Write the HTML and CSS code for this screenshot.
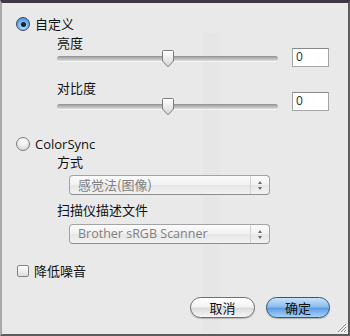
FILE: index.html
```html
<!DOCTYPE html>
<html lang="zh">
<head>
<meta charset="utf-8">
<title>自定义</title>
<link rel="stylesheet" href="styles.css">
</head>
<body>
<div class="window">
  <div class="ghost-band"></div>
  <div class="pane">
    <div class="option-row">
      <span class="radio radio-on"><span class="radio-dot"></span></span>
      <span class="option-text">自定义</span>
    </div>
    <div class="label label-brightness">亮度</div>
    <div class="slider-row slider-row-1">
      <div class="slider">
        <div class="track"></div>
        <svg class="thumb" width="14" height="18" viewBox="0 0 14 18">
          <defs>
            <linearGradient id="tg1" x1="0" y1="0" x2="0" y2="1">
              <stop offset="0" stop-color="#ffffff"/>
              <stop offset="1" stop-color="#d6d6d6"/>
            </linearGradient>
          </defs>
          <path d="M1.5 1.5 Q1.5 0.5 2.5 0.5 H11.5 Q12.5 0.5 12.5 1.5 V11 L7 16.8 L1.5 11 Z" fill="url(#tg1)" stroke="#7a7a7a" stroke-width="1"/>
        </svg>
      </div>
      <div class="field field-1">0</div>
    </div>
    <div class="label label-contrast">对比度</div>
    <div class="slider-row slider-row-2">
      <div class="slider">
        <div class="track"></div>
        <svg class="thumb" width="14" height="18" viewBox="0 0 14 18">
          <defs>
            <linearGradient id="tg2" x1="0" y1="0" x2="0" y2="1">
              <stop offset="0" stop-color="#ffffff"/>
              <stop offset="1" stop-color="#d6d6d6"/>
            </linearGradient>
          </defs>
          <path d="M1.5 1.5 Q1.5 0.5 2.5 0.5 H11.5 Q12.5 0.5 12.5 1.5 V11 L7 16.8 L1.5 11 Z" fill="url(#tg2)" stroke="#7a7a7a" stroke-width="1"/>
        </svg>
      </div>
      <div class="field field-2">0</div>
    </div>

    <div class="option-row option-colorsync">
      <span class="radio"></span>
      <span class="option-text latin">ColorSync</span>
    </div>
    <div class="label label-method">方式</div>
    <div class="popup popup-1">
      <span class="popup-text">感觉法(图像)</span>
      <span class="popup-arrows"><span class="arr-up"></span><span class="arr-down"></span></span>
    </div>
    <div class="label label-profile">扫描仪描述文件</div>
    <div class="popup popup-2">
      <span class="popup-text">Brother sRGB Scanner</span>
      <span class="popup-arrows"><span class="arr-up"></span><span class="arr-down"></span></span>
    </div>

    <div class="option-row option-noise">
      <span class="checkbox"></span>
      <span class="option-text">降低噪音</span>
    </div>

    <div class="buttons">
      <span class="btn btn-cancel">取消</span>
      <span class="btn btn-ok">确定</span>
    </div>
  </div>
  <svg class="grip" width="11" height="11" viewBox="0 0 11 11">
    <path d="M10 2 L2 10 M10 5 L5 10 M10 8 L8 10" stroke="#8a8a8a" stroke-width="1"/>
    <path d="M10.5 3 L3 10.5 M10.5 6 L6 10.5 M10.5 9 L9 10.5" stroke="#ffffff" stroke-width="0.8"/>
  </svg>
</div>
</body>
</html>
```

FILE: styles.css
```css
* { box-sizing: border-box; }

html, body {
  margin: 0;
  padding: 0;
  background: #e8e8e8;
}

body {
  font-family: "Noto Sans CJK SC", "Open Sans", sans-serif;
  font-size: 13px;
  color: #111;
}

.window {
  position: relative;
  width: 350px;
  height: 336px;
  background: #e9e9e9;
  border-top: 3px solid #3f3843;
  border-left: 2px solid #a9a9a9;
  border-right: 2px solid #5c5c5c;
  border-bottom: 2px solid #5c5c5c;
  overflow: hidden;
}

.ghost-band {
  position: absolute;
  left: 201px;
  top: 30px;
  width: 17px;
  height: 300px;
  background: rgba(0, 0, 0, 0.012);
}

.pane {
  position: relative;
  padding: 14px 18px 0 14px;
}

.option-row {
  display: flex;
  align-items: center;
  height: 14px;
  gap: 5px;
}

.option-text {
  line-height: 14px;
  white-space: nowrap;
}

.latin {
  font-family: "Open Sans", sans-serif;
  font-size: 13px;
}

.radio {
  width: 14px;
  height: 14px;
  border-radius: 50%;
  border: 1px solid #7d7d7d;
  background: radial-gradient(circle at 50% 30%, #ffffff 0%, #f0f0f0 40%, #c9c9c9 100%);
  display: flex;
  align-items: center;
  justify-content: center;
  flex: none;
}

.radio-on {
  border-color: #2f4a6a;
  background: radial-gradient(circle at 50% 70%, #bfe2ff 0%, #7fb6ea 45%, #3e7dc4 100%);
}

.radio-dot {
  width: 5px;
  height: 5px;
  border-radius: 50%;
  background: #13243a;
}

.label {
  margin-left: 41px;
  height: 14px;
  line-height: 14px;
  white-space: nowrap;
}

.label-brightness { margin-top: 5px; }
.label-contrast { margin-top: 13px; }
.label-method { margin-top: 4px; }
.label-profile { margin-top: 8px; }

.slider-row {
  display: flex;
  align-items: flex-start;
  gap: 14px;
  margin-left: 41px;
}

.slider-row-2 { margin-top: 3px; }

.slider {
  position: relative;
  width: 221px;
  height: 18px;
}

.track {
  position: absolute;
  left: 0;
  right: 0;
  top: 6px;
  height: 5px;
  border-radius: 3px;
  background: linear-gradient(#8f8f8f, #b9b9b9 50%, #dedede);
  box-shadow: 0 1px 0 rgba(255,255,255,0.6);
}

.thumb {
  position: absolute;
  left: 104px;
  top: 0;
}

.field {
  width: 37px;
  height: 19px;
  background: #ffffff;
  border: 1px solid #a5a5a5;
  border-top-color: #8a8a8a;
  font-family: "Open Sans", sans-serif;
  font-size: 12px;
  line-height: 15px;
  padding-left: 3px;
  color: #2a2f38;
}

.field-1 { margin-top: -2px; }
.field-2 { margin-top: -6px; }

.option-colorsync { margin-top: 21px; }

.popup {
  display: flex;
  align-items: stretch;
  margin-left: 53px;
  width: 201px;
  height: 20px;
  border: 1px solid #a3a3a3;
  border-bottom-color: #8e8e8e;
  border-radius: 4px;
  background: linear-gradient(#fbfbfb, #f1f1f1 50%, #e6e6e6 51%, #f2f2f2);
}

.popup-1 { margin-top: 6px; }
.popup-2 { margin-top: 7px; }

.popup-text {
  flex: 1;
  padding-left: 8px;
  line-height: 18px;
  color: #808080;
  white-space: nowrap;
}

.popup-2 .popup-text {
  font-family: "Open Sans", sans-serif;
  font-size: 12.5px;
}

.popup-arrows {
  width: 19px;
  border-left: 1px solid #d2d2d2;
  display: flex;
  flex-direction: column;
  align-items: center;
  justify-content: center;
  gap: 3px;
}

.arr-up, .arr-down {
  width: 0;
  height: 0;
  border-left: 2.5px solid transparent;
  border-right: 2.5px solid transparent;
}

.arr-up { border-bottom: 3px solid #6a6a6a; }
.arr-down { border-top: 3px solid #6a6a6a; }

.option-noise { margin-top: 20px; }

.checkbox {
  width: 12px;
  height: 12px;
  margin-left: 1px;
  border: 1px solid #858585;
  border-radius: 2px;
  background: linear-gradient(#ffffff, #efefef 50%, #dcdcdc);
  flex: none;
}

.buttons {
  display: flex;
  justify-content: flex-end;
  gap: 11px;
  margin-top: 19px;
}

.btn {
  height: 21px;
  border-radius: 11px;
  text-align: center;
  line-height: 19px;
  font-size: 13px;
}

.btn-cancel {
  width: 65px;
  border: 1px solid #6f6f6f;
  background: linear-gradient(#ffffff, #f4f4f4 45%, #dcdcdc 55%, #f6f6f6);
  box-shadow: 0 1px 1px rgba(0,0,0,0.2);
}

.btn-ok {
  width: 64px;
  border: 1px solid #33577f;
  background: linear-gradient(#c9e2fb, #8fbdee 45%, #5d9ee3 55%, #a6d3fa);
  box-shadow: 0 1px 1px rgba(0,0,0,0.25);
}

.grip {
  position: absolute;
  right: 1px;
  bottom: 1px;
}
```
